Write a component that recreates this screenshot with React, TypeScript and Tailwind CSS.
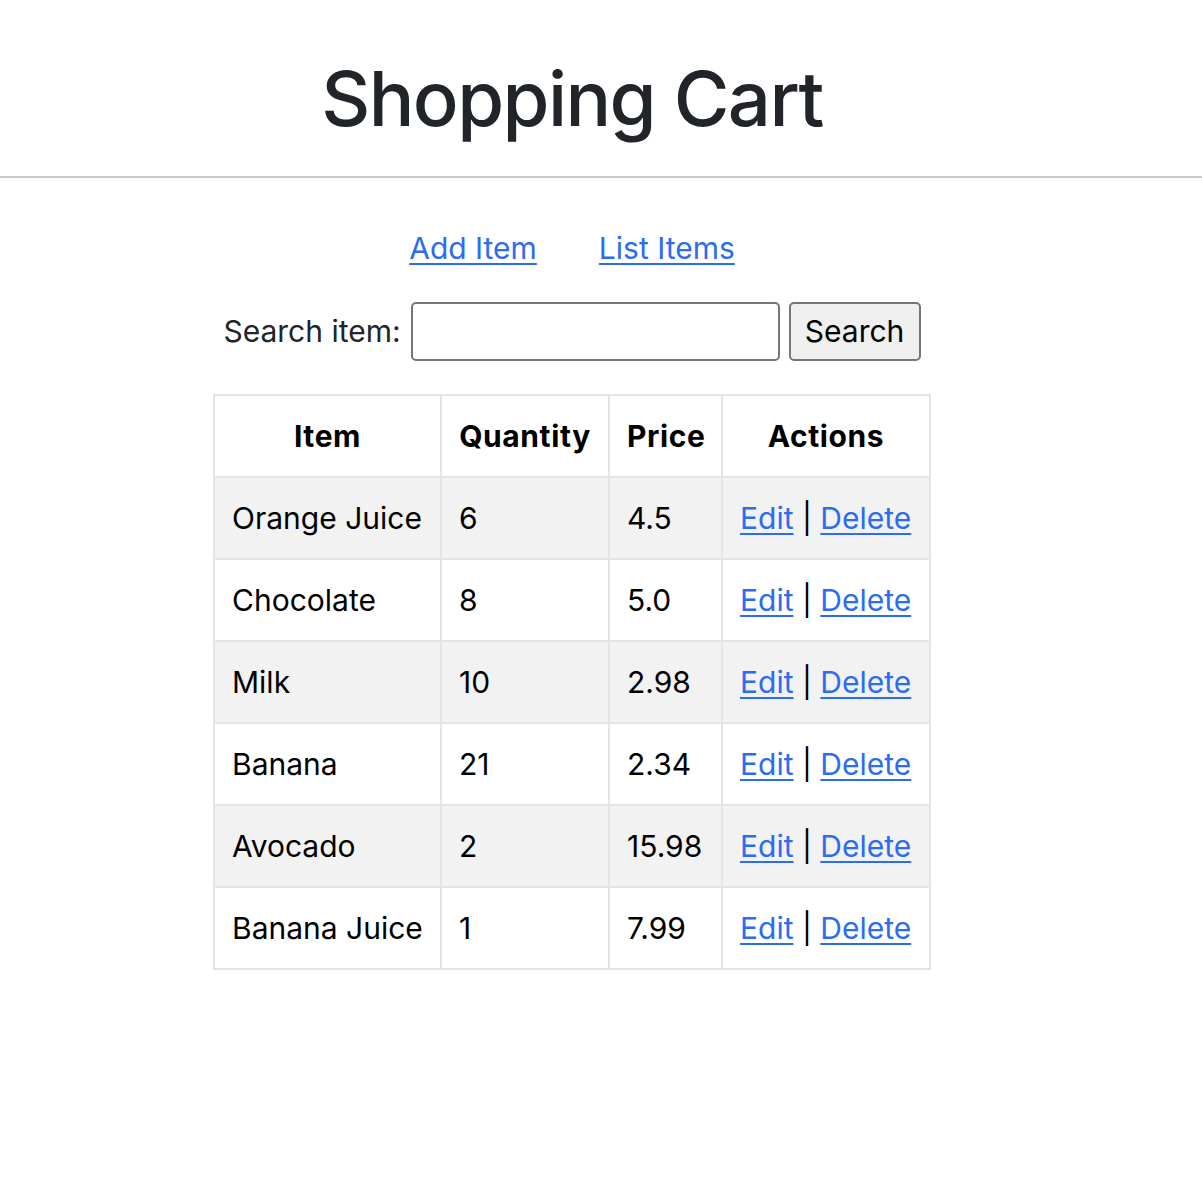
import { useState } from 'react'

const items = [
  { name: 'Orange Juice', qty: 6, price: '4.5' },
  { name: 'Chocolate', qty: 8, price: '5.0' },
  { name: 'Milk', qty: 10, price: '2.98' },
  { name: 'Banana', qty: 21, price: '2.34' },
  { name: 'Avocado', qty: 2, price: '15.98' },
  { name: 'Banana Juice', qty: 1, price: '7.99' },
]

export default function App() {
  const [query, setQuery] = useState('')

  return (
    <div className="min-h-[1200px] bg-white font-['Inter','Liberation_Sans',sans-serif] text-[#212529]">
      {/* Header */}
      <div className="w-[1144px] pt-[51px] pb-[31px] text-center">
        <h1 className="text-[76px] leading-[94px] font-medium tracking-[-1.6px]">Shopping Cart</h1>
      </div>
      <hr className="border-0 h-[2px] bg-[#c8c8c8]" />

      <div className="w-[1144px] flex flex-col items-center">
        {/* Nav links */}
        <nav className="mt-[49px] flex gap-[62px] text-[30px] leading-[43px]">
          <a href="#" className="text-[#2b6cf3] underline underline-offset-[4px] decoration-2">Add Item</a>
          <a href="#" className="text-[#2b6cf3] underline underline-offset-[4px] decoration-2">List Items</a>
        </nav>

        {/* Search */}
        <form
          className="mt-[32px] flex items-center h-[59px] text-[30px]"
          onSubmit={(e) => e.preventDefault()}
        >
          <label htmlFor="search" className="mr-[10px]">Search item:</label>
          <input
            id="search"
            value={query}
            onChange={(e) => setQuery(e.target.value)}
            className="w-[369px] h-[59px] border-2 border-[#767676] rounded-[5px] px-2 outline-none"
          />
          <button
            type="submit"
            className="ml-[9px] w-[132px] h-[59px] bg-[#efefef] border-2 border-[#767676] rounded-[5px] text-black"
          >
            Search
          </button>
        </form>

        {/* Table */}
        <table className="mt-[33px] w-[716px] table-fixed border-collapse border-2 border-[#e2e4e7] text-[30px] leading-[44px] text-black">
          <thead>
            <tr>
              <th className="w-[227px] border-2 border-[#e2e4e7] px-[17px] py-[18px] font-bold tracking-[0.6px] text-center">Item</th>
              <th className="w-[168px] border-2 border-[#e2e4e7] px-[17px] py-[18px] font-bold tracking-[0.6px] text-center">Quantity</th>
              <th className="w-[113px] border-2 border-[#e2e4e7] px-[17px] py-[18px] font-bold tracking-[0.6px] text-center">Price</th>
              <th className="w-[208px] border-2 border-[#e2e4e7] px-[17px] py-[18px] font-bold tracking-[0.6px] text-center">Actions</th>
            </tr>
          </thead>
          <tbody>
            {items.map((item, i) => (
              <tr key={item.name} className={i % 2 === 0 ? 'bg-[#f2f2f2]' : 'bg-white'}>
                <td className="border-2 border-[#e2e4e7] px-[17px] py-[18px] whitespace-nowrap">{item.name}</td>
                <td className="border-2 border-[#e2e4e7] px-[17px] py-[18px]">{item.qty}</td>
                <td className="border-2 border-[#e2e4e7] px-[17px] py-[18px]">{item.price}</td>
                <td className="border-2 border-[#e2e4e7] px-[17px] py-[18px] whitespace-nowrap">
                  <a href="#" className="text-[#2b6cf3] underline underline-offset-[4px] decoration-2">Edit</a>
                  {' | '}
                  <a href="#" className="text-[#2b6cf3] underline underline-offset-[4px] decoration-2">Delete</a>
                </td>
              </tr>
            ))}
          </tbody>
        </table>
      </div>
    </div>
  )
}
